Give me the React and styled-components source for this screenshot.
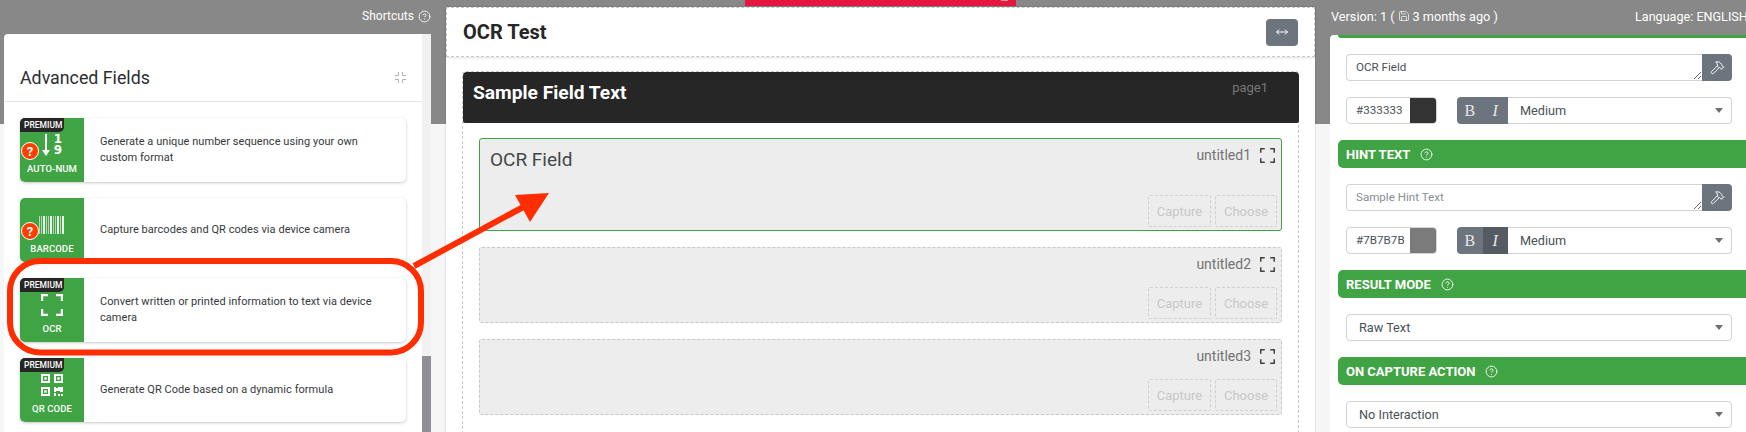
import React from 'react';
import styled, { createGlobalStyle } from 'styled-components';
import { CircleHelp, Save, Hammer } from 'lucide-react';

const Global = createGlobalStyle`
  html, body { margin: 0; padding: 0; height: 432px; overflow: hidden; }
  body { font-family: Roboto, "Liberation Sans", sans-serif; color: #212529; }
  * { box-sizing: border-box; }
`;

const Page = styled.div`
  position: relative;
  width: 1746px; height: 432px; overflow: hidden;
  display: grid;
  grid-template-columns: 446px 884px 416px;
  background: linear-gradient(#888888 124px, #f6f6f6 124px);
`;

const LeftCol = styled.div`padding-left: 4px;`;
const TopNote = styled.div`
  height: 34px; display: flex; align-items: center; gap: 4px;
  color: #fff; font-size: 12px; white-space: nowrap;
  justify-content: ${p => p.$end ? 'flex-end' : 'flex-start'};
  padding-bottom: 2px;
`;
const LeftTop = styled(TopNote)`width: 427px;`;
const LeftPanel = styled.div`
  width: 427px; height: 398px; background: #fff; border-radius: 4px 0 0 0;
  display: grid; grid-template-columns: 418px 9px;
`;
const LeftMain = styled.div`min-width: 0;`;
const PanelHead = styled.div`
  height: 68px; border-bottom: 1px solid #e3e5e7; padding: 0 16px;
  display: flex; align-items: center; justify-content: space-between;
  padding-top: 20px;
`;
const PanelTitle = styled.h2`margin: 0; font-size: 17.8px; font-weight: 400; color: #2b2e31;`;
const FieldList = styled.div`padding: 16px; display: flex; flex-direction: column; gap: 16px;`;
const Track = styled.div`
  background: #f1f1f1; display: flex; flex-direction: column; justify-content: flex-end;
`;
const Thumb = styled.div`height: 82px; background: #8d8f94;`;

const Card = styled.div`
  position: relative; height: 64px; width: 386px; background: #fff; border-radius: 5px;
  box-shadow: 0 1px 3px rgba(0,0,0,.22); display: flex; align-items: center;
`;
const Tile = styled.div`
  width: 64px; height: 64px; flex: none; background: #41a444; color: #fff; border-radius: 5px 0 0 5px;
  display: flex; flex-direction: column; align-items: center; position: relative;
`;
const TileArt = styled.div`
  height: 40px; padding-top: 13px; display: flex; align-items: center; justify-content: center;
`;
const TileName = styled.div`
  margin-top: 5px; font-size: 9.5px; line-height: 11px; font-weight: 500; letter-spacing: .1px;
`;
const Premium = styled.div`
  position: absolute; left: 0; top: 0; width: 44px; height: 14px; background: #262626;
  color: #fff; font-size: 8.5px; line-height: 14px; font-weight: 500; padding-left: 4px;
  border-radius: 5px 0 5px 0;
`;
const Warn = styled.div`
  position: absolute; left: 1px; top: 24px; width: 18px; height: 18px; border-radius: 50%;
  background: #ff3d00; border: 1.5px solid #fff; color: #fff; font-size: 13px; font-weight: 700;
  display: flex; align-items: center; justify-content: center;
`;
const CardText = styled.div`
  padding: 0 16px; font-size: 11px; line-height: 16px; color: #34383c; letter-spacing: .05px;
  white-space: nowrap;
`;
const NumStack = styled.div`
  display: flex; flex-direction: column; margin-left: 4px;
  font: 700 12px/11px "DejaVu Sans", sans-serif;
  text-align: center;
`;

const CenterCol = styled.div`
  display: flex; flex-direction: column;
`;
const AlertRow = styled.div`height: 7px; padding-left: 299px;`;
const AlertBar = styled.div`
  width: 271px; height: 6px; background: #e6173e; display: flex; justify-content: flex-end; padding-right: 8px;
`;
const AlertMark = styled.div`width: 7px; height: 1px; background: #f59bab;`;
const Sheet = styled.div`
  width: 869px; flex: 1; background: #fff; box-shadow: 0 0 2px rgba(0,0,0,.2);
`;
const SheetHead = styled.div`
  height: 50px; border: 1px dashed #c8c8c8; border-bottom-width: 1px; padding: 0 16px;
  display: flex; align-items: center; justify-content: space-between;
  box-shadow: 0 1px 2px rgba(0,0,0,.12);
`;
const SheetTitle = styled.h1`margin: 0; font-size: 20px; font-weight: 700; color: #262626;`;
const WideBtn = styled.div`
  width: 32px; height: 27px; background: #6c757d; border-radius: 4px; color: #fff;
  display: flex; align-items: center; justify-content: center;
`;
const PageBox = styled.div`
  margin: 14px 16px 0; border: 1px dashed #c8c8c8; border-bottom: 0; border-radius: 4px 4px 0 0;
  height: 400px;
`;
const PageHead = styled.div`
  height: 51px; margin: 0 -1px 0 0; background: #262626; border-radius: 4px 4px 2px 2px;
  display: flex; justify-content: space-between; padding: 0 31px 0 10px;
`;
const PageTitle = styled.div`font-size: 19.2px; font-weight: 700; color: #fff; line-height: 42px;`;
const PageKey = styled.div`font-size: 13px; color: #777; line-height: 32px;`;
const Fields = styled.div`
  padding: 15px 16px 0 16px; display: flex; flex-direction: column; gap: 16px;
`;
const Field = styled.div`
  height: ${p => p.$active ? 93 : 76}px; background: #ededed; border-radius: 3px;
  border: 1px ${p => p.$active ? 'solid #41a444' : 'dashed #c8c8c8'};
  padding: 0 4px 3px 10px; display: flex; flex-direction: column; justify-content: space-between;
`;
const FieldTop = styled.div`
  display: flex; justify-content: space-between; padding: 8px 2px 0 0;
`;
const FieldLabel = styled.div`font-size: 19px; line-height: 26px; color: #43474a;`;
const FieldMeta = styled.div`
  display: flex; align-items: center; gap: 9px; height: 16px; margin-left: auto;
  font-size: 14px; color: #747474;
`;
const FieldBtns = styled.div`display: flex; justify-content: flex-end; gap: 4px;`;
const GhostBtn = styled.div`
  height: 32px; width: ${p => p.$w}px; border: 1px dashed #cfcfcf; border-radius: 2px; color: #c8c8c8;
  font-size: 13px; display: flex; align-items: center; justify-content: center;
`;

const RightCol = styled.div``;
const VersionRow = styled.div`
  height: 35px; display: flex; color: #fff; font-size: 12.7px; padding-left: 1px;
  justify-content: space-between; white-space: nowrap; overflow: hidden;
`;
const Version = styled.div`display: flex; align-items: center; gap: 3px; padding-bottom: 3px;`;
const Language = styled.div`display: flex; align-items: center; width: 111px; overflow: hidden; padding-bottom: 2px; font-size: 12.6px;`;
const RightPanel = styled.div`
  height: 397px; background: #fff; border-radius: 4px 0 0 0; padding-left: 8px;
`;
const TopStripe = styled.div`height: 3px; background: #41a444; border-radius: 0 0 0 4px; margin-bottom: 16px;`;
const Section = styled.div`
  height: 28px; background: #41a444; color: #fff; border-radius: 5px 0 0 5px; padding-left: 8px;
  display: flex; align-items: center; gap: 10px; font-size: 13px; font-weight: 700; margin: 16px 0;
`;
const Ctl = styled.div`width: 386px; margin-left: 8px;`;
const InputRow = styled(Ctl)`display: flex; height: 27px;`;
const Area = styled.textarea`
  flex: 1; min-width: 0; height: 27px; min-height: 27px; max-height: 27px; resize: vertical; overflow: hidden;
  border: 1px solid #ced4da; border-right: 0; border-radius: 4px 0 0 4px; padding: 5px 9px;
  font: 400 11.6px/15px Roboto, sans-serif; color: #495057; outline: none; display: block;
  &::placeholder { color: #868e96; opacity: 1; }
`;
const ToolBtn = styled.div`
  width: 30px; height: 27px; background: #6c757d; border-radius: 0 4px 4px 0; color: #fff;
  display: flex; align-items: center; justify-content: center;
`;
const StyleRow = styled(Ctl)`display: flex; height: 27px; margin-top: 16px; gap: 20px;`;
const Hex = styled.div`
  width: 91px; height: 27px; display: flex; border: 1px solid #ced4da; border-radius: 4px; overflow: hidden;
`;
const HexText = styled.div`
  flex: 1; font-size: 11.6px; line-height: 25px; padding-left: 9px; color: #495057; letter-spacing: .05px;
`;
const Swatch = styled.div`width: 26px; background: ${p => p.$c};`;
const Group = styled.div`flex: 1; display: flex; height: 27px;`;
const Toggle = styled.div`
  width: 25.5px; background: ${p => p.$on ? '#545b62' : '#6c757d'}; color: #e8e8e8;
  font: ${p => p.$i ? 'italic ' : ''}400 16px/27px "Liberation Serif", serif; text-align: center;
  border-radius: ${p => p.$i ? 0 : '4px 0 0 4px'};
`;
const Select = styled.div`
  flex: 1; height: 27px; border: 1px solid #ced4da; border-radius: ${p => p.$joined ? '0 4px 4px 0' : '4px'};
  ${p => p.$joined ? 'border-left: 0;' : ''}
  display: flex; align-items: center; justify-content: space-between;
  padding: 0 8px 0 12px; font-size: 12.7px; color: #495057;
`;
const Caret = styled.span`
  width: 0; height: 0; border-left: 4px solid transparent; border-right: 4px solid transparent;
  border-top: 5px solid #6f6f6f;
`;
const SelectRow = styled(Ctl)`display: flex;`;

const Overlay = styled.svg`
  position: absolute; left: 0; top: 0; pointer-events: none;
`;

const Brackets = ({ size = 22, color = '#fff', w = 2.4 }) => (
  <svg width={size} height={size} viewBox="0 0 22 22" fill="none" stroke={color} strokeWidth={w * 22 / size}>
    <path d="M1 7V1h6M15 1h6v6M21 15v6h-6M7 21H1v-6" />
  </svg>
);
const Collapse = () => (
  <svg width="11" height="11" viewBox="0 0 11 11" fill="none" stroke="#b0b0b0" strokeWidth="1">
    <path d="M0 3.500h3.500V0M7.500 0v3.500H11M11 7.500H7.500V11M3.500 11V7.500H0" />
  </svg>
);
const Barcode = () => (
  <svg width="26" height="18" viewBox="0 0 26 18" fill="#fff">
    {[[0,1],[2,1],[4,2],[7,1],[9,1],[11,2],[14,1],[16,1],[18,2],[21,1],[23,2]].map(([x,w]) => (
      <rect key={x} x={x} y="0" width={w} height="18" opacity={w === 2 ? .9 : .6} />
    ))}
  </svg>
);
const Qr = () => (
  <svg width="22" height="22" viewBox="0 0 22 22" fill="#fff">
    <path fillRule="evenodd" d="M0 0h9v9H0zM2 2v5h5V2zM13 0h9v9h-9zM15 2v5h5V2zM0 13h9v9H0zM2 15v5h5v-5z" />
    <rect x="3.300" y="3.300" width="2.400" height="2.400" /><rect x="16.300" y="3.300" width="2.400" height="2.400" /><rect x="3.300" y="16.300" width="2.400" height="2.400" />
    <path d="M13 13h2v1h2v-1h5v5h-3v-1h-4v1h-2zM13 19h2v3h-2zM17 20h2v2h-2zM20 20h2v2h-2z" />
  </svg>
);
const DownArrow = () => (
  <svg width="8" height="22" viewBox="0 0 8 22" fill="#fff">
    <rect x="3" y="0" width="2" height="18" /><path d="M0 16h8l-4 6z" />
  </svg>
);

const cards = [
  { name: 'AUTO-NUM', premium: true, warn: true, text: <>Generate a unique number sequence using your own<br />custom format</>,
    art: <><DownArrow /><NumStack><span>1</span><span>9</span></NumStack></> },
  { name: 'BARCODE', warn: true, text: 'Capture barcodes and QR codes via device camera', art: <Barcode /> },
  { name: 'OCR', premium: true, text: <>Convert written or printed information to text via device<br />camera</>, art: <Brackets /> },
  { name: 'QR CODE', premium: true, text: 'Generate QR Code based on a dynamic formula', art: <Qr /> },
];

const Help = ({ size = 13 }) => <CircleHelp size={size} strokeWidth={1.6} />;

const StyleControls = ({ hex, color, on }) => (
  <StyleRow>
    <Hex><HexText>{hex}</HexText><Swatch $c={color} /></Hex>
    <Group>
      <Toggle>B</Toggle>
      <Toggle $i $on={on}>I</Toggle>
      <Select $joined>Medium<Caret /></Select>
    </Group>
  </StyleRow>
);

export default function App() {
  return (
    <Page>
      <Global />
      <LeftCol>
        <LeftTop $end>Shortcuts <Help /></LeftTop>
        <LeftPanel>
          <LeftMain>
            <PanelHead><PanelTitle>Advanced Fields</PanelTitle><Collapse /></PanelHead>
            <FieldList>
              {cards.map(c => (
                <Card key={c.name}>
                  <Tile>
                    <TileArt>{c.art}</TileArt>
                    <TileName>{c.name}</TileName>
                    {c.premium && <Premium>PREMIUM</Premium>}
                  </Tile>
                  {c.warn && <Warn>?</Warn>}
                  <CardText>{c.text}</CardText>
                </Card>
              ))}
            </FieldList>
          </LeftMain>
          <Track><Thumb /></Track>
        </LeftPanel>
      </LeftCol>

      <CenterCol>
        <AlertRow><AlertBar><AlertMark /></AlertBar></AlertRow>
        <Sheet>
          <SheetHead>
            <SheetTitle>OCR Test</SheetTitle>
            <WideBtn>
              <svg width="12" height="8" viewBox="0 0 12 8" fill="none" stroke="#fff" strokeWidth="1">
                <path d="M.5 4h11M3 1.500.5 4 3 6.500M9 1.500 11.500 4 9 6.500" />
              </svg>
            </WideBtn>
          </SheetHead>
          <PageBox>
            <PageHead><PageTitle>Sample Field Text</PageTitle><PageKey>page1</PageKey></PageHead>
            <Fields>
              {['untitled1', 'untitled2', 'untitled3'].map((key, i) => (
                <Field key={key} $active={i === 0}>
                  <FieldTop>
                    {i === 0 && <FieldLabel>OCR Field</FieldLabel>}
                    <FieldMeta>{key}<Brackets size={15} color="#444" w={1.6} /></FieldMeta>
                  </FieldTop>
                  <FieldBtns>
                    <GhostBtn $w={63}>Capture</GhostBtn>
                    <GhostBtn $w={62}>Choose</GhostBtn>
                  </FieldBtns>
                </Field>
              ))}
            </Fields>
          </PageBox>
        </Sheet>
      </CenterCol>

      <RightCol>
        <VersionRow>
          <Version>Version: 1 ( <Save size={12} strokeWidth={1.4} /> 3 months ago )</Version>
          <Language>Language: ENGLISH (</Language>
        </VersionRow>
        <RightPanel>
          <TopStripe />
          <InputRow>
            <Area readOnly defaultValue="OCR Field" />
            <ToolBtn><Hammer size={15} strokeWidth={1.5} /></ToolBtn>
          </InputRow>
          <StyleControls hex="#333333" color="#333333" />
          <Section>HINT TEXT <Help /></Section>
          <InputRow>
            <Area readOnly placeholder="Sample Hint Text" />
            <ToolBtn><Hammer size={15} strokeWidth={1.5} /></ToolBtn>
          </InputRow>
          <StyleControls hex="#7B7B7B" color="#7b7b7b" on />
          <Section>RESULT MODE <Help /></Section>
          <SelectRow><Select>Raw Text<Caret /></Select></SelectRow>
          <Section>ON CAPTURE ACTION <Help /></Section>
          <SelectRow><Select>No Interaction<Caret /></Select></SelectRow>
        </RightPanel>
      </RightCol>

      <Overlay width="1746" height="432" viewBox="0 0 1746 432">
        <rect x="10" y="261" width="411" height="91.500" rx="30" fill="none" stroke="#ff2d00" strokeWidth="6" />
        <path d="M414 266 527 205" stroke="#ff2d00" strokeWidth="6" fill="none" />
        <path d="M515 195 549 193 530 222z" fill="#ff2d00" />
      </Overlay>
    </Page>
  );
}
